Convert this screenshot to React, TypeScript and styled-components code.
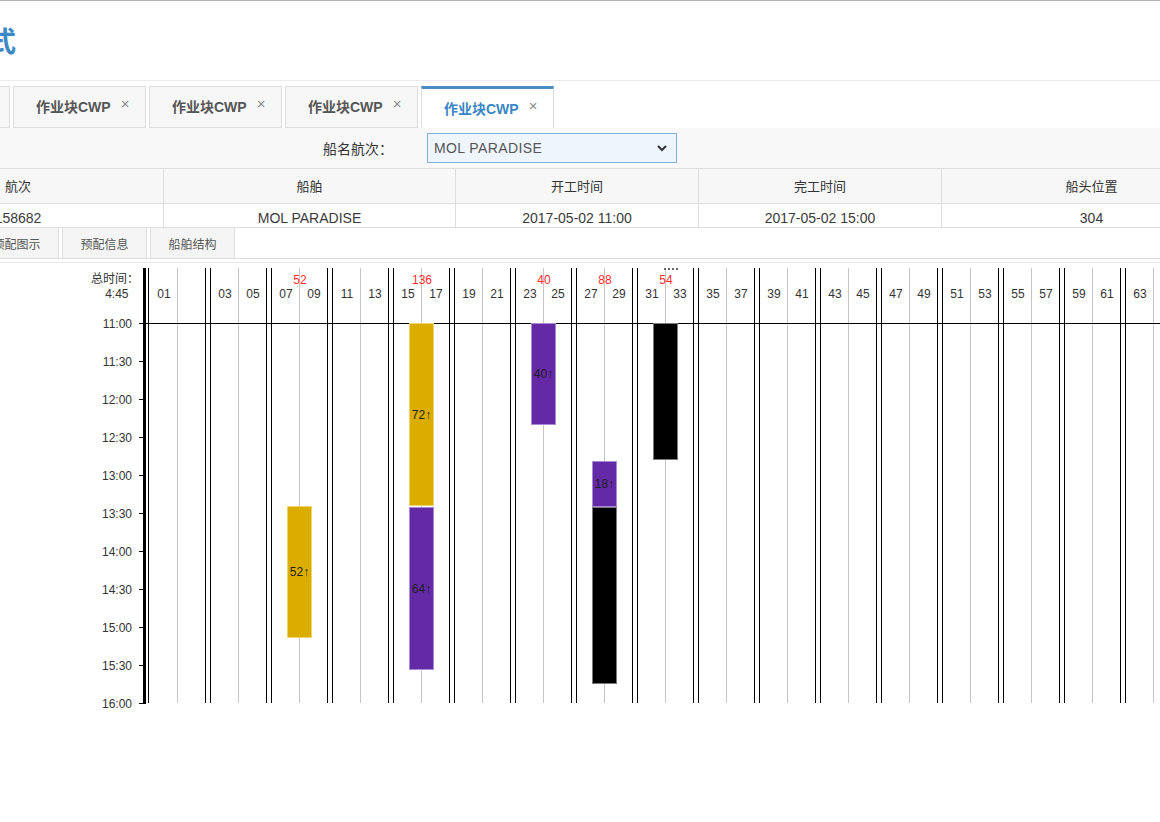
import React from "react";
import styled, { createGlobalStyle } from "styled-components";

const GlobalStyle = createGlobalStyle`
  html, body {
    margin: 0;
    padding: 0;
    background: #fff;
  }
  body {
    font-family: "Liberation Sans", "Noto Sans CJK SC", sans-serif;
    color: #333;
  }
`;

const Page = styled.div`
  width: 1160px;
  height: 822px;
  overflow: hidden;
  border-top: 1px solid #b3b3b3;
  box-sizing: border-box;
`;

const Header = styled.div`
  height: 80px;
  box-sizing: border-box;
  border-bottom: 1px solid #ececec;
  padding-top: 25px;
`;

const Title = styled.h1`
  margin: 0 0 0 -12px;
  font-family: "Noto Sans CJK SC", sans-serif;
  font-size: 28px;
  line-height: 28px;
  font-weight: bold;
  color: #3d89c7;
  white-space: nowrap;
`;

const TabBar = styled.div`
  display: flex;
  align-items: flex-end;
  gap: 3px;
  height: 47px;
  box-sizing: border-box;
  padding-top: 5px;
  margin-left: -123px;
`;

const Tab = styled.div<{ $active?: boolean }>`
  flex: none;
  width: 133px;
  height: 42px;
  box-sizing: border-box;
  display: flex;
  align-items: center;
  padding: 0 0 ${(p) => (p.$active ? "2px" : "3px")} 22px;
  border: 1px solid #dcdcdc;
  border-top: ${(p) => (p.$active ? "3px solid #4a8ec6" : "1px solid #dcdcdc")};
  border-bottom: ${(p) => (p.$active ? "none" : "1px solid #dcdcdc")};
  background: ${(p) => (p.$active ? "#fff" : "#f7f7f7")};
  color: ${(p) => (p.$active ? "#3a86c5" : "#555")};
  font-size: 14px;
  font-weight: bold;
  white-space: nowrap;
`;

const TabClose = styled.span`
  margin-left: 10px;
  margin-bottom: 4px;
  font-size: 15px;
  font-weight: normal;
  color: #8a8a8a;
`;

const FilterBar = styled.div`
  height: 40px;
  box-sizing: border-box;
  display: flex;
  align-items: center;
  padding-left: 323px;
  background: #f8f8f8;
`;

const FilterLabel = styled.span`
  font-family: "Noto Sans CJK SC", sans-serif;
  font-size: 14px;
  color: #333;
  margin-right: 34px;
`;

const Select = styled.div`
  width: 250px;
  height: 30px;
  box-sizing: border-box;
  border: 1px solid #7fb0d8;
  background: #eef5fd;
  display: flex;
  align-items: center;
  justify-content: space-between;
  padding: 0 9px 0 6px;
  font-size: 14px;
  color: #555;
  letter-spacing: 0.4px;
`;

const Grid = styled.div`
  margin-left: -127px;
`;

const HeadRow = styled.div`
  display: flex;
  height: 36px;
  box-sizing: border-box;
  border-top: 1px solid #ddd;
  border-bottom: 1px solid #ddd;
  background: #f7f7f7;
  font-family: "Noto Sans CJK SC", sans-serif;
  font-size: 13px;
  line-height: 34px;
  color: #333;
`;

const BodyRow = styled.div`
  display: flex;
  height: 24px;
  box-sizing: border-box;
  border-bottom: 1px solid #ddd;
  font-size: 14px;
  color: #3a3a3a;
`;

const Cell = styled.div<{ $w: number }>`
  flex: none;
  width: ${(p) => p.$w}px;
  box-sizing: border-box;
  border-right: 1px solid #ddd;
  text-align: center;
  white-space: nowrap;
  overflow: hidden;
`;

const BodyCell = styled(Cell)`
  padding-top: 6px;
  line-height: 17px;
`;

const ToolBar = styled.div`
  display: flex;
  gap: 3px;
  height: 31px;
  box-sizing: border-box;
  border-bottom: 1px solid #ddd;
  margin-left: -26px;
`;

const ToolButton = styled.div`
  flex: none;
  width: 85px;
  height: 30px;
  box-sizing: border-box;
  border-left: 1px solid #ddd;
  border-right: 1px solid #ddd;
  background: #f5f5f5;
  font-family: "Noto Sans CJK SC", sans-serif;
  font-size: 12px;
  color: #555;
  line-height: 31px;
  text-align: center;
`;

const ChartFrame = styled.div`
  margin-top: 3px;
  border-top: 1px solid #e6e6e6;
`;

const ChartSvg = styled.svg`
  display: block;
  shape-rendering: crispEdges;
`;

const TimeText = styled.text`
  font-family: "Liberation Sans", "Noto Sans CJK SC", sans-serif;
  font-size: 12px;
  fill: #333;
  text-anchor: end;
`;

const BayText = styled.text`
  font-family: "Liberation Sans", sans-serif;
  font-size: 12px;
  fill: #333;
  text-anchor: middle;
`;

const CountText = styled(BayText)`
  fill: #ff2b2b;
`;

const BarText = styled(BayText)`
  fill: #1e1e1e;
`;

const columns = [291, 292, 243, 243, 300];
const heads = ["航次", "船舶", "开工时间", "完工时间", "船头位置"];
const values = ["158682", "MOL PARADISE", "2017-05-02 11:00", "2017-05-02 15:00", "304"];

const bays = [
  ["01", ""], ["03", "05"], ["07", "09"], ["11", "13"], ["15", "17"], ["19", "21"],
  ["23", "25"], ["27", "29"], ["31", "33"], ["35", "37"], ["39", "41"], ["43", "45"],
  ["47", "49"], ["51", "53"], ["55", "57"], ["59", "61"], ["63", "65"],
];

const counts: Record<number, string> = { 2: "52", 4: "136", 6: "40", 7: "88", 8: "54" };

const times = ["11:00", "11:30", "12:00", "12:30", "13:00", "13:30", "14:00", "14:30", "15:00", "15:30", "16:00"];

const barColors = {
  load: { fill: "#dbad00", stroke: "#f1d46b" },
  disc: { fill: "#6429a5", stroke: "#a98bd4" },
  hatch: { fill: "#000", stroke: "#7a7a7a" },
};

type Bar = { c: number; y0: number; y1: number; kind: keyof typeof barColors; label: string };

const bars: Bar[] = [
  { c: 299, y0: 506, y1: 638, kind: "load", label: "52↑" },
  { c: 421, y0: 323, y1: 506, kind: "load", label: "72↑" },
  { c: 421, y0: 507, y1: 670, kind: "disc", label: "64↑" },
  { c: 543, y0: 323, y1: 425, kind: "disc", label: "40↑" },
  { c: 604, y0: 461, y1: 507, kind: "disc", label: "18↑" },
  { c: 604, y0: 507, y1: 684, kind: "hatch", label: "" },
  { c: 665, y0: 323, y1: 460, kind: "hatch", label: "" },
];

const TOP = 268;
const BOTTOM = 703;

function CwpChart() {
  return (
    <ChartSvg width={1160} height={559} viewBox="0 263 1160 559">
      {/* axis */}
      <rect x={143} y={TOP} width={3} height={BOTTOM - TOP + 1} fill="#000" />
      {times.map((t, k) => {
        const y = 323 + k * 38;
        return (
          <g key={t}>
            <rect x={139} y={y} width={4} height={1} fill="#000" />
            <TimeText x={132} y={y + 4.5}>{t}</TimeText>
          </g>
        );
      })}
      <TimeText x={139} y={283}>总时间：</TimeText>
      <TimeText x={128.5} y={298}>4:45</TimeText>

      {/* bays */}
      {bays.map((pair, i) => {
        const c = 177 + 61 * i;
        const left = i === 0 ? 148 : c - 28;
        const right = c + 28;
        return (
          <g key={i}>
            <rect x={left} y={TOP} width={1} height={BOTTOM - TOP} fill="#000" />
            <rect x={c} y={TOP} width={1} height={BOTTOM - TOP} fill="#c4c4c4" />
            <rect x={right} y={TOP} width={1} height={BOTTOM - TOP} fill="#000" />
            <BayText x={c - 13} y={298}>{pair[0]}</BayText>
            <BayText x={c + 15} y={298}>{pair[1]}</BayText>
            {counts[i] && <CountText x={c + 1} y={284}>{counts[i]}</CountText>}
          </g>
        );
      })}
      <rect x={139} y={323} width={1021} height={1} fill="#000" />

      {/* marker above 54 */}
      {[664, 668, 672, 676].map((x) => (
        <rect key={x} x={x} y={268} width={2} height={2} fill="#666" />
      ))}

      {/* work blocks */}
      {bars.map((b, i) => (
        <g key={i}>
          <rect
            x={b.c - 12 + 0.5}
            y={b.y0 + 0.5}
            width={24}
            height={b.y1 - b.y0 - 1}
            fill={barColors[b.kind].fill}
            stroke={barColors[b.kind].stroke}
            strokeWidth={1}
          />
          {b.label && (
            <BarText x={b.c + 0.5} y={(b.y0 + b.y1) / 2 + 4}>{b.label}</BarText>
          )}
        </g>
      ))}
    </ChartSvg>
  );
}

export default function App() {
  return (
    <Page>
      <GlobalStyle />
      <Header>
        <Title>式</Title>
      </Header>
      <TabBar>
        {[0, 1, 2, 3, 4].map((i) => (
          <Tab key={i} $active={i === 4}>
            作业块CWP<TabClose>×</TabClose>
          </Tab>
        ))}
      </TabBar>
      <FilterBar>
        <FilterLabel>船名航次：</FilterLabel>
        <Select>
          <span>MOL PARADISE</span>
          <svg width="10" height="7" viewBox="0 0 10 7">
            <polyline points="1,1 5,5 9,1" fill="none" stroke="#333" strokeWidth="2" />
          </svg>
        </Select>
      </FilterBar>
      <Grid>
        <HeadRow>
          {heads.map((h, i) => (
            <Cell key={h} $w={columns[i]}>{h}</Cell>
          ))}
        </HeadRow>
        <BodyRow>
          {values.map((v, i) => (
            <BodyCell key={i} $w={columns[i]}>{v}</BodyCell>
          ))}
        </BodyRow>
      </Grid>
      <ToolBar>
        <ToolButton>预配图示</ToolButton>
        <ToolButton>预配信息</ToolButton>
        <ToolButton>船舶结构</ToolButton>
      </ToolBar>
      <ChartFrame>
        <CwpChart />
      </ChartFrame>
    </Page>
  );
}
